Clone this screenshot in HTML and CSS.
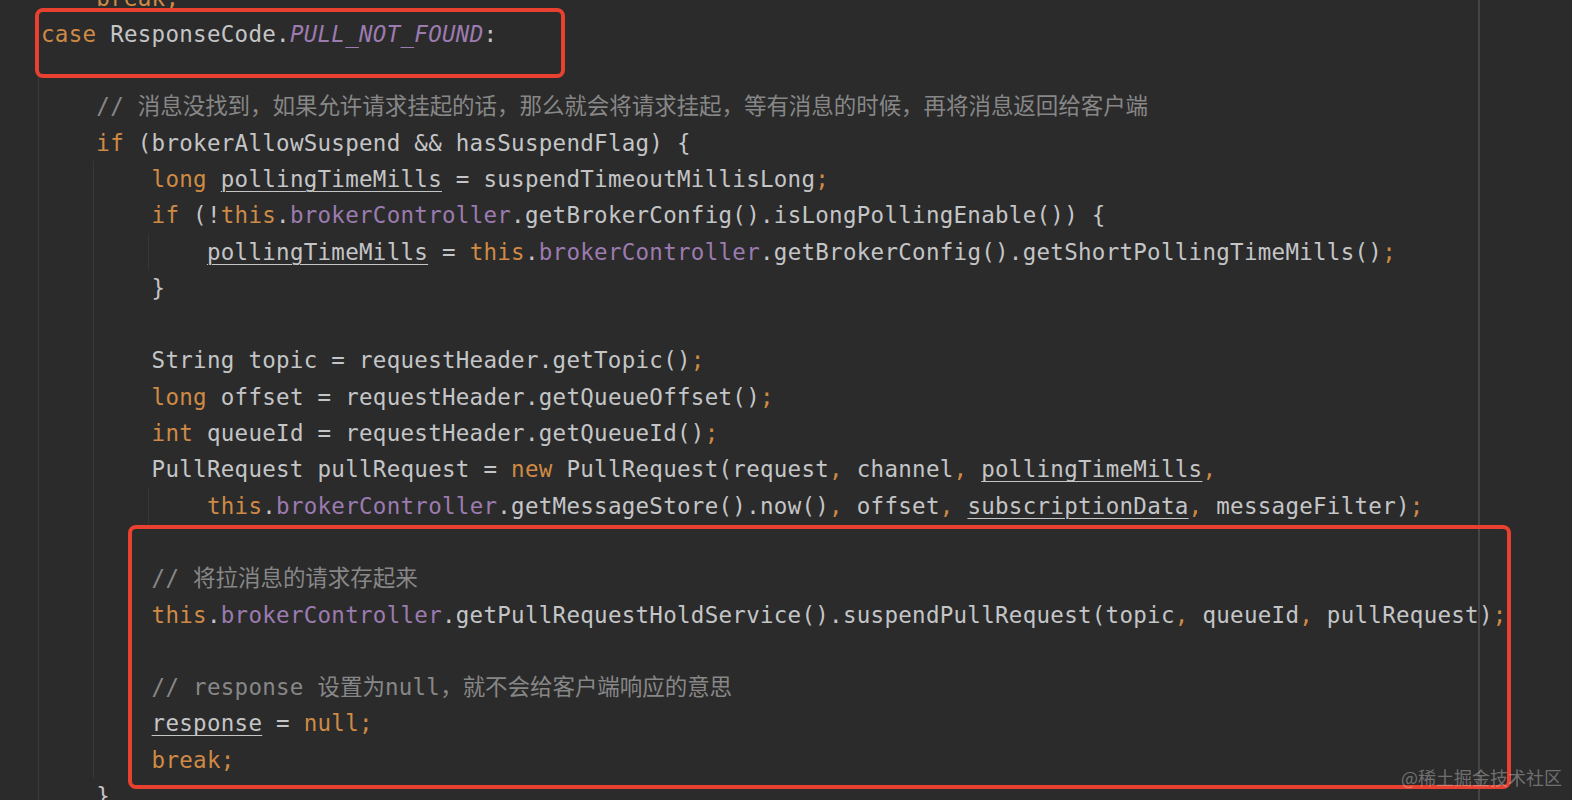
FILE: index.html
```html
<!DOCTYPE html>
<html lang="zh-CN">
<head>
    <meta charset="UTF-8">
    <meta name="viewport" content="width=device-width, initial-scale=1.0">
    <title>PullMessageProcessor</title>
    <link rel="stylesheet" href="styles.css">
</head>
<body>
    <div class="editor">
        <div class="code">
<div class="line">    <span class="k">break;</span></div>
<div class="line"><span class="k">case</span> ResponseCode.<span class="f i">PULL_NOT_FOUND</span>:</div>
<div class="line g1"> </div>
<div class="line g1">    <span class="c">// <span class="zh">消息没找到，如果允许请求挂起的话，那么就会将请求挂起，等有消息的时候，再将消息返回给客户端</span></span></div>
<div class="line g1">    <span class="k">if</span> (brokerAllowSuspend &amp;&amp; hasSuspendFlag) {</div>
<div class="line g2">        <span class="k">long</span> <span class="u">pollingTimeMills</span> = suspendTimeoutMillisLong<span class="k">;</span></div>
<div class="line g2">        <span class="k">if</span> (!<span class="k">this</span>.<span class="f">brokerController</span>.getBrokerConfig().isLongPollingEnable()) {</div>
<div class="line g3">            <span class="u">pollingTimeMills</span> = <span class="k">this</span>.<span class="f">brokerController</span>.getBrokerConfig().getShortPollingTimeMills()<span class="k">;</span></div>
<div class="line g2">        }</div>
<div class="line g2"> </div>
<div class="line g2">        String topic = requestHeader.getTopic()<span class="k">;</span></div>
<div class="line g2">        <span class="k">long</span> offset = requestHeader.getQueueOffset()<span class="k">;</span></div>
<div class="line g2">        <span class="k">int</span> queueId = requestHeader.getQueueId()<span class="k">;</span></div>
<div class="line g2">        PullRequest pullRequest = <span class="k">new</span> PullRequest(request<span class="k">,</span> channel<span class="k">,</span> <span class="u">pollingTimeMills</span><span class="k">,</span></div>
<div class="line g3">            <span class="k">this</span>.<span class="f">brokerController</span>.getMessageStore().now()<span class="k">,</span> offset<span class="k">,</span> <span class="u">subscriptionData</span><span class="k">,</span> messageFilter)<span class="k">;</span></div>
<div class="line g2"> </div>
<div class="line g2">        <span class="c">// <span class="zh">将拉消息的请求存起来</span></span></div>
<div class="line g2">        <span class="k">this</span>.<span class="f">brokerController</span>.getPullRequestHoldService().suspendPullRequest(topic<span class="k">,</span> queueId<span class="k">,</span> pullRequest)<span class="k">;</span></div>
<div class="line g2"> </div>
<div class="line g2">        <span class="c">// response <span class="zh">设置为</span>null<span class="zh">，就不会给客户端响应的意思</span></span></div>
<div class="line g2">        <span class="u">response</span> = <span class="k">null;</span></div>
<div class="line g2">        <span class="k">break;</span></div>
<div class="line g1">    }</div>
        </div>

        <div class="mark mark-case"></div>
        <div class="mark mark-hold"></div>
        <div class="watermark">@稀土掘金技术社区</div>
    </div>
</body>
</html>
```

FILE: styles.css
```css
body {
    margin: 0;
    background-color: #2b2b2b;
    overflow: hidden;
}

.editor {
    position: relative;
    height: 800px;
    overflow: hidden;
    background: linear-gradient(#454545, #454545) 1478px 0 / 2px 100% no-repeat, #2b2b2b;
}

.code {
    margin-top: -20.5px;
    font-family: "DejaVu Sans Mono", "Noto Sans CJK SC", monospace;
    font-size: 22.5px;
    letter-spacing: 0.28px;
    line-height: 36.3px;
    color: #c4c5c7;
}

.line {
    height: 36.3px;
    padding-left: 41px;
    white-space: pre;
}

.g1 {
    background: linear-gradient(#3a3a3a, #3a3a3a) 38px 0 / 1px 100% no-repeat;
}

.g2 {
    background:
        linear-gradient(#3a3a3a, #3a3a3a) 38px 0 / 1px 100% no-repeat,
        linear-gradient(#383838, #383838) 93px 0 / 1px 100% no-repeat;
}

.g3 {
    background:
        linear-gradient(#3a3a3a, #3a3a3a) 38px 0 / 1px 100% no-repeat,
        linear-gradient(#383838, #383838) 93px 0 / 1px 100% no-repeat,
        linear-gradient(#363636, #363636) 148px 0 / 1px 100% no-repeat;
}

.k {
    color: #cf8a45;
}

.f {
    color: #9c7bb0;
}

.i {
    font-style: italic;
}

.c {
    color: #878787;
}

.zh {
    letter-spacing: -0.05px;
}

.u {
    text-decoration: underline;
    text-decoration-thickness: 1px;
    text-underline-offset: 4px;
}

.mark {
    position: absolute;
    border: 4px solid #e8412f;
    border-radius: 8px;
    box-sizing: border-box;
}

.mark-case {
    left: 35px;
    top: 8px;
    width: 530px;
    height: 70px;
}

.mark-hold {
    left: 128px;
    top: 525px;
    width: 1383px;
    height: 264px;
}

.watermark {
    position: absolute;
    right: 10px;
    bottom: 10px;
    font-family: "Noto Sans CJK SC", sans-serif;
    font-size: 18px;
    color: rgba(200, 200, 200, 0.45);
}
```
